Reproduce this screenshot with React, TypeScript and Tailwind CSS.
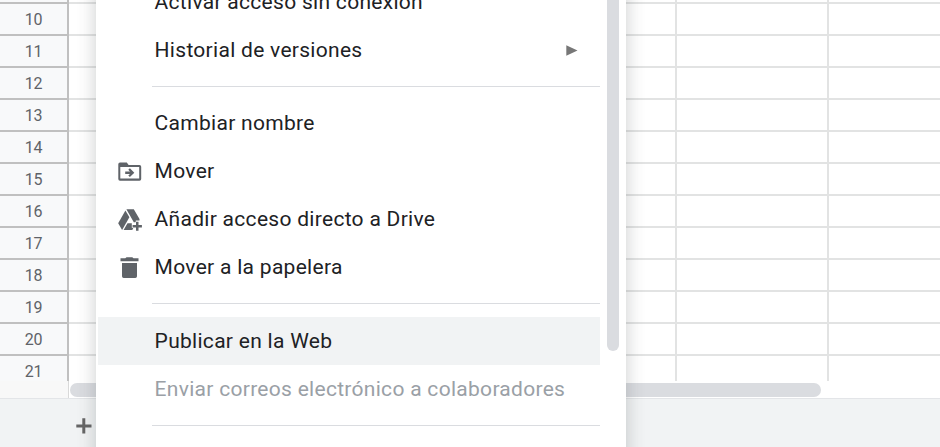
import type { ReactNode } from "react";

const rows = [9, 10, 11, 12, 13, 14, 15, 16, 17, 18, 19, 20, 21];

function FolderMoveIcon() {
  return (
    <svg width="24" height="20" viewBox="0 0 24 20" fill="#5f6368">
      <path
        fillRule="evenodd"
        d="M2 .5h6.800L10.600 3H21.500A1.700 1.700 0 0 1 23.200 4.700V17a1.700 1.700 0 0 1-1.700 1.700H2A1.700 1.700 0 0 1 .3 17V2.200A1.700 1.700 0 0 1 2 .500zM2.300 5.100v11.500H21.200V5.100z"
      />
      <path d="M11.900 6.300 16.300 10.700 11.900 15.100 10.300 13.600l1.700-1.700H7.200V9.500h4.800l-1.700-1.700z" />
    </svg>
  );
}

function DriveAddIcon() {
  return (
    <svg width="24" height="22" viewBox="0 0 24 22" fill="#5f6368">
      <path d="M7.400 1.400 11.400 8.200 4.100 21 .2 14.300z" />
      <path d="M8.400.2h7.400l5.700 9.900v1.500h-3.700v1.700h-2z" />
      <path d="M9.500 14.200h4.300v4.600h1.600L14.300 21H5.600z" />
      <path
        d="M18 12.800h2.500v3.300h3.400v2.400h-3.400v3.300H18v-3.300h-3.400v-2.400H18z"
        stroke="white"
        strokeWidth="1"
        paintOrder="stroke"
      />
    </svg>
  );
}

function TrashIcon() {
  return (
    <svg width="20" height="22" viewBox="0 0 20 22" fill="#5f6368">
      <path d="M.5 1.300h4.800L6.500.2h5.800l1.200 1.100h5v3H.5z" />
      <path d="M2 6h15v13.300a1.700 1.700 0 0 1-1.700 1.700H3.700A1.700 1.700 0 0 1 2 19.300z" />
    </svg>
  );
}

type ItemProps = {
  label: string;
  icon?: ReactNode;
  submenu?: boolean;
  active?: boolean;
  disabled?: boolean;
};

function Item({ label, icon, submenu, active, disabled }: ItemProps) {
  return (
    <div
      className={`ml-0.5 flex h-12 w-[502px] shrink-0 items-center ${active ? "bg-[#f1f3f4]" : ""} ${
        disabled ? "text-[#9aa0a6]" : "text-[#202124]"
      }`}
    >
      <span className="flex w-[56.6px] shrink-0 justify-center pl-[7px] pt-0.5">{icon}</span>
      <span className="grow whitespace-nowrap text-[21px] leading-6 tracking-[0.29px]">{label}</span>
      {submenu && (
        <svg className="mr-[22px]" width="12" height="11" viewBox="0 0 12 11" fill="#777">
          <path d="M.3.3 11.500 5.500.3 10.700z" />
        </svg>
      )}
    </div>
  );
}

function Divider({ className = "" }: { className?: string }) {
  return <div className={`my-3 ml-14 h-px w-[448px] shrink-0 bg-[#dadce0] ${className}`} />;
}

function Sheet() {
  return (
    <div className="flex h-[447px] flex-col">
      <div className="flex h-[381px] shrink-0 overflow-hidden">
        <div className="-mt-7 w-[69px] shrink-0 border-r-2 border-[#c0c0c0] bg-[#f8f9fa]">
          {rows.map((n) => (
            <div
              key={n}
              className="flex h-8 items-center justify-center border-b-2 border-[#c0c0c0] pt-0.5 text-[16px] leading-5 tracking-[-0.3px] text-[#5f6368]"
            >
              {n}
            </div>
          ))}
        </div>
        <div className="-mt-7 grow">
          {rows.map((n) => (
            <div key={n} className="flex h-8 border-b-2 border-[#e2e3e3]">
              {[0, 1, 2, 3, 4].map((c) => (
                <div key={c} className="w-[152px] shrink-0 border-r-2 border-[#e2e3e3]" />
              ))}
            </div>
          ))}
        </div>
      </div>
      <div className="flex h-[17px] shrink-0">
        <div className="w-[69px] border-r border-[#d9d9d9] bg-[#f8f8f8]" />
        <div className="ml-px mt-0.5 h-3.5 w-[751px] rounded-full bg-[#dadce0]" />
      </div>
      <div className="grow border-t border-[#e3e5e8] bg-[#f1f3f4] pl-[76px] pt-[19px]">
        <svg width="16" height="16" viewBox="0 0 16 16" fill="#666">
          <path d="M6.300.3h3v6.100h6.200v3H9.300v6.100h-3V9.400H.3v-3h6z" />
        </svg>
      </div>
    </div>
  );
}

export default function App() {
  return (
    <div className="relative h-[447px] w-[940px] overflow-hidden bg-white font-['Roboto','Liberation_Sans',sans-serif]">
      <Sheet />
      <div className="absolute -top-[22px] left-24 flex h-[520px] w-[530px] bg-white shadow-[0_3px_16px_2px_rgba(60,64,67,0.22)]">
        <div className="flex w-[511px] flex-col">
          <Item label="Activar acceso sin conexión" />
          <Item label="Historial de versiones" submenu />
          <Divider />
          <Item label="Cambiar nombre" />
          <Item label="Mover" icon={<FolderMoveIcon />} />
          <Item label="Añadir acceso directo a Drive" icon={<DriveAddIcon />} />
          <Item label="Mover a la papelera" icon={<TrashIcon />} />
          <Divider className="mb-[13px]" />
          <Item label="Publicar en la Web" active />
          <Item label="Enviar correos electrónico a colaboradores" disabled />
          <Divider />
        </div>
        <div className="h-[373px] w-3 rounded-full bg-[#dadce0]" />
      </div>
    </div>
  );
}
